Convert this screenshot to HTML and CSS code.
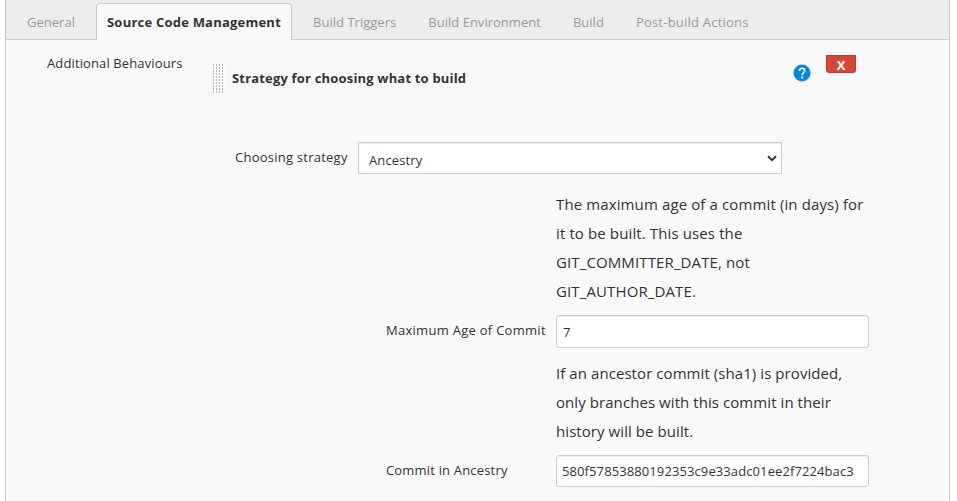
FILE: index.html
```html
<!DOCTYPE html>
<html lang="en">
<head>
<meta charset="utf-8">
<title>Source Code Management</title>
<link rel="stylesheet" href="styles.css">
</head>
<body>
<main class="panel">
  <nav class="tabs">
    <a class="tab">General</a>
    <a class="tab active">Source Code Management</a>
    <a class="tab">Build Triggers</a>
    <a class="tab">Build Environment</a>
    <a class="tab">Build</a>
    <a class="tab last">Post-build Actions</a>
  </nav>
  <section class="behaviours">
    <div class="section-label">Additional Behaviours</div>
    <div class="content">
      <header class="heading">
        <i class="grip"></i>
        <h2>Strategy for choosing what to build</h2>
        <svg class="help" viewBox="0 0 18 18"><circle cx="9" cy="9" r="8.5" fill="#0786d6"/><path d="M6.4 7.1C6.4 5.2 7.4 4.3 9 4.3s2.7 1 2.7 2.5c0 2.1-2.6 2.1-2.6 4.5" fill="none" stroke="#fff" stroke-width="1.6"/><path d="M8.2 12.6h1.8v1.8H8.2z" fill="#fff"/></svg>
        <button class="remove">X</button>
      </header>
      <div class="strategy">
        <label>Choosing strategy</label>
        <div class="select"><span>Ancestry</span><svg viewBox="0 0 10 7"><path d="M1 1.3 5 5.1 9 1.3" fill="none" stroke="#333" stroke-width="2"/></svg></div>
      </div>
      <div class="options">
        <p>The maximum age of a commit (in days) for<br>it to be built. This uses the<br>GIT_COMMITTER_DATE, not<br>GIT_AUTHOR_DATE.</p>
        <label>Maximum Age of Commit</label>
        <div class="input age">7</div>
        <p class="second">If an ancestor commit (sha1) is provided,<br>only branches with this commit in their<br>history will be built.</p>
        <label class="commit">Commit in Ancestry</label>
        <div class="input sha">580f57853880192353c9e33adc01ee2f7224bac3</div>
      </div>
    </div>
  </section>
</main>
</body>
</html>
```

FILE: styles.css
```css
* { box-sizing: border-box; }
body {
  margin: 0;
  background: #fff;
  color: #333;
  font: 13px/20px "Open Sans", "Noto Sans", sans-serif;
  overflow: hidden;
}
.panel {
  width: 945px;
  height: 501px;
  margin-left: 5px;
  border: solid #ccc;
  border-width: 0 1px;
  background: #f9f9f9;
}
.tabs {
  display: flex;
  height: 40px;
  padding: 3px 0 0 10px;
  border-bottom: 1px solid #ccc;
  background: #ededed;
}
.tab {
  height: 37px;
  padding: 8px 10px 0;
  border: 1px solid transparent;
  border-bottom: 0;
  margin-right: 10px;
  color: #999;
  white-space: nowrap;
  letter-spacing: .02px;
}
.active {
  border-color: #ccc;
  border-radius: 4px 4px 0 0;
  background: #f9f9f9;
  color: #333;
  font-weight: 700;
  letter-spacing: .22px;
}
.last { letter-spacing: .22px; }
.behaviours { display: grid; grid-template-columns: 207px 1fr; }
.section-label { padding: 13px 0 0 41px; letter-spacing: .12px; }
.content { white-space: nowrap; }
.heading { display: flex; height: 102px; align-items: flex-start; }
.grip {
  width: 12px;
  height: 29px;
  margin-top: 24px;
  background:
    conic-gradient(from 90deg at 2px 2px, transparent 75%, #b4b4ad 0) 1px 0 / 3px 3px,
    #fff;
  background-blend-mode: normal;
}
h2 {
  width: 561px;
  margin: 28px 0 0 7px;
  font-size: 13px;
  line-height: 20px;
  letter-spacing: .18px;
}
.help { width: 18px; height: 18px; margin-top: 24px; }
.remove {
  width: 30px;
  height: 18px;
  margin: 15px 0 0 15px;
  padding: 0;
  border: 1px solid #b93b2e;
  border-radius: 0 0 3px 3px;
  background: #d24939;
  color: #fff;
  font: 700 13px/18px "Open Sans", sans-serif;
}
.strategy { display: grid; grid-template-columns: 123px 424px; padding-left: 22px; }
.strategy label { padding-top: 5px; letter-spacing: .24px; }
.select {
  display: flex;
  justify-content: space-between;
  height: 32px;
  padding: 7px 4px 0 10px;
  border: 1px solid #ccc;
  background: #fff;
  box-shadow: inset 0 1px 1px #00000013;
  letter-spacing: .12px;
}
.select svg { width: 10px; height: 7px; margin-top: 5px; }
.options { display: grid; grid-template-columns: 170px 313px; padding: 16px 0 0 173px; }
.options p {
  grid-column: 2;
  height: 125px;
  margin: 0;
  font-size: 15px;
  line-height: 29px;
  letter-spacing: .12px;
}
.options .second { height: 96px; margin-top: 11px; letter-spacing: .07px; }
.options label { padding-top: 5px; letter-spacing: .28px; }
.options .commit { letter-spacing: .18px; }
.input {
  height: 33px;
  padding: 6px;
  border: 1px solid #ccc;
  border-radius: 3px;
  background: #fff;
  box-shadow: inset 0 1px 1px #00000013;
}
.sha { height: 32px; padding: 5px; letter-spacing: .1px; }
```
